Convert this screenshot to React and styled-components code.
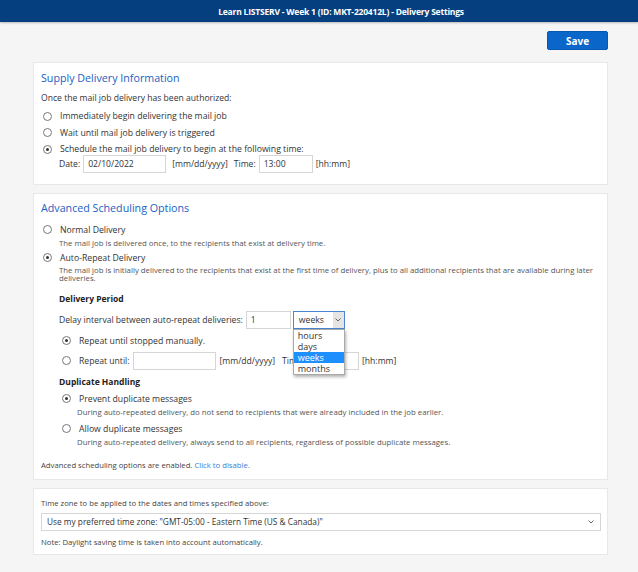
import React from "react";
import styled, { createGlobalStyle } from "styled-components";

const GlobalStyle = createGlobalStyle`
  body {
    margin: 0;
    background: #f5f5f5;
    font-family: "Open Sans", "Noto Sans", sans-serif;
    color: #333;
  }
`;

const Header = styled.div`
  height: 22px;
  background: #053f7f;
  color: #fff;
  font-size: 8.5px;
  font-weight: 700;
  letter-spacing: -0.2px;
  display: flex;
  justify-content: center;
  align-items: center;
  padding-left: 44px;
  box-shadow: 0 1px 2px rgba(0, 0, 0, 0.25);
`;

const Toolbar = styled.div`
  display: flex;
  justify-content: flex-end;
  padding: 9px 30px 0 0;
`;

const SaveButton = styled.button`
  width: 61px;
  height: 19px;
  border: 1px solid #0858b0;
  border-radius: 2px;
  background: #0a66c8;
  color: #fff;
  font-family: inherit;
  font-size: 10px;
  font-weight: 700;
  padding: 0;
`;

const Main = styled.div`
  display: flex;
  flex-direction: column;
  gap: 8px;
  padding: 12px 30px 16px 33px;
`;

const Card = styled.div`
  background: #fff;
  border: 1px solid #e8e8e8;
  padding: ${({ $pad }) => $pad || "7px 7px 11px"};
`;

const Title = styled.div`
  color: #1a5fc2;
  font-size: 10.7px;
  line-height: 16px;
`;

const Text = styled.div`
  font-size: 8.6px;
  line-height: 16px;
  margin-top: ${({ $mt }) => $mt || "0"};
`;

const RadioRow = styled.div`
  display: flex;
  align-items: center;
  gap: 8px;
  height: ${({ $h }) => $h || "16.5px"};
  font-size: 8.7px;
  padding-left: ${({ $indent }) => ($indent ? "21px" : "2px")};
  margin-top: ${({ $mt }) => $mt || "0"};
`;

const Radio = styled.span`
  width: 7px;
  height: 7px;
  border: 1px solid #777;
  border-radius: 50%;
  display: inline-flex;
  align-items: center;
  justify-content: center;
  flex-shrink: 0;
  background: #fff;

  &::after {
    content: "";
    width: 3px;
    height: 3px;
    border-radius: 50%;
    background: ${({ $on }) => ($on ? "#333" : "transparent")};
  }
`;

const Desc = styled.div`
  font-size: 7.8px;
  color: #555;
  line-height: ${({ $lh }) => $lh || "11px"};
  padding-left: ${({ $indent }) => ($indent ? "36px" : "18px")};
`;

const FieldRow = styled.div`
  display: flex;
  align-items: center;
  font-size: 8.6px;
  height: 18px;
  padding-left: ${({ $pl }) => $pl || "18px"};
  margin-top: ${({ $mt }) => $mt || "0"};
`;

const Input = styled.div`
  box-sizing: border-box;
  width: ${({ $w }) => $w}px;
  height: 18px;
  border: 1px solid #d6d6d6;
  font-size: 8.6px;
  line-height: 16px;
  padding-left: 4px;
  margin: ${({ $m }) => $m || "0 3px"};
  background: #fff;
`;

const Sub = styled.div`
  font-size: 8.5px;
  font-weight: 700;
  color: #222;
  padding-left: 18px;
  margin-top: ${({ $mt }) => $mt || "0"};
  line-height: 14px;
`;

const SelectWrap = styled.div`
  position: relative;
`;

const Select = styled.div`
  box-sizing: border-box;
  width: ${({ $w }) => $w};
  height: 18px;
  border: 1px solid ${({ $focus }) => ($focus ? "#4a86d0" : "#d6d6d6")};
  display: flex;
  align-items: center;
  justify-content: space-between;
  font-size: ${({ $fs }) => $fs || "8.7px"};
  padding-left: 5px;
  margin-top: ${({ $mt }) => $mt || "0"};
  background: #fff;
`;

const Chevron = styled.span`
  width: 11px;
  height: 100%;
  display: flex;
  align-items: center;
  justify-content: center;
  background: ${({ $boxed }) => ($boxed ? "#e4e4e4" : "transparent")};
  margin-right: ${({ $boxed }) => ($boxed ? "0" : "4px")};
`;

const Menu = styled.div`
  position: absolute;
  top: 18px;
  left: 0;
  width: 52px;
  box-sizing: border-box;
  background: #fff;
  border: 1px solid #a9a9a9;
  box-shadow: 1px 2px 3px rgba(0, 0, 0, 0.3);
  z-index: 2;
`;

const MenuItem = styled.div`
  font-size: 9px;
  line-height: 11px;
  padding-left: 4px;
  color: ${({ $active }) => ($active ? "#fff" : "#333")};
  background: ${({ $active }) => ($active ? "#1e8fff" : "transparent")};
`;

const Footnote = styled.div`
  font-size: 7.7px;
  line-height: 12px;
  color: #444;
  margin-top: ${({ $mt }) => $mt || "0"};
`;

const Link = styled.a`
  color: #3a7bd5;
  text-decoration: none;
`;

const Label = styled.span`
  white-space: nowrap;
  margin-left: ${({ $ml }) => $ml || "0"};
`;

function Arrow() {
  return (
    <svg width="6" height="4" viewBox="0 0 6 4">
      <path d="M0.5 0.5 L3 3 L5.5 0.5" fill="none" stroke="#666" strokeWidth="1" />
    </svg>
  );
}

export default function App() {
  return (
    <>
      <GlobalStyle />
      <Header>Learn LISTSERV - Week 1 (ID: MKT-220412L) - Delivery Settings</Header>
      <Toolbar>
        <SaveButton>Save</SaveButton>
      </Toolbar>
      <Main>
        <Card>
          <Title>Supply Delivery Information</Title>
          <Text $mt="4px">Once the mail job delivery has been authorized:</Text>
          <RadioRow $mt="2px">
            <Radio />
            Immediately begin delivering the mail job
          </RadioRow>
          <RadioRow>
            <Radio />
            Wait until mail job delivery is triggered
          </RadioRow>
          <RadioRow>
            <Radio $on />
            Schedule the mail job delivery to begin at the following time:
          </RadioRow>
          <FieldRow $mt="-3px">
            <Label>Date:</Label>
            <Input $w={83}>02/10/2022</Input>
            <Label $ml="3px">[mm/dd/yyyy]</Label>
            <Label $ml="6px">Time:</Label>
            <Input $w={54}>13:00</Input>
            <Label>[hh:mm]</Label>
          </FieldRow>
        </Card>

        <Card $pad="6px 7px 8px">
          <Title>Advanced Scheduling Options</Title>
          <RadioRow $mt="6px" $h="16px">
            <Radio />
            Normal Delivery
          </RadioRow>
          <Desc>The mail job is delivered once, to the recipients that exist at delivery time.</Desc>
          <RadioRow $mt="1px" $h="16px">
            <Radio $on />
            Auto-Repeat Delivery
          </RadioRow>
          <Desc $lh="8.5px">
            The mail job is initially delivered to the recipients that exist at the first time of delivery, plus to all additional recipients that are available during later deliveries.
          </Desc>
          <Sub $mt="9px">Delivery Period</Sub>
          <FieldRow $mt="5px">
            <Label>Delay interval between auto-repeat deliveries:</Label>
            <Input $w={45} $m="0 2px 0 3px">1</Input>
            <SelectWrap>
              <Select $w="52px" $focus>
                weeks
                <Chevron $boxed>
                  <Arrow />
                </Chevron>
              </Select>
              <Menu>
                <MenuItem>hours</MenuItem>
                <MenuItem>days</MenuItem>
                <MenuItem $active>weeks</MenuItem>
                <MenuItem>months</MenuItem>
              </Menu>
            </SelectWrap>
          </FieldRow>
          <RadioRow $indent $mt="2px" $h="20px">
            <Radio $on />
            Repeat until stopped manually.
          </RadioRow>
          <FieldRow $pl="21px" $mt="1px">
            <Radio />
            <Label $ml="8px">Repeat until:</Label>
            <Input $w={83} $m="0 3px 0 4px">{""}</Input>
            <Label>[mm/dd/yyyy]</Label>
            <Label $ml="7px">Time:</Label>
            <Input $w={52}>{""}</Input>
            <Label>[hh:mm]</Label>
          </FieldRow>
          <Sub $mt="5px">Duplicate Handling</Sub>
          <RadioRow $indent $mt="2px" $h="16px">
            <Radio $on />
            Prevent duplicate messages
          </RadioRow>
          <Desc $indent>During auto-repeated delivery, do not send to recipients that were already included in the job earlier.</Desc>
          <RadioRow $indent $mt="3px" $h="16px">
            <Radio />
            Allow duplicate messages
          </RadioRow>
          <Desc $indent>During auto-repeated delivery, always send to all recipients, regardless of possible duplicate messages.</Desc>
          <Footnote $mt="11px">
            Advanced scheduling options are enabled. <Link href="#">Click to disable.</Link>
          </Footnote>
        </Card>

        <Card $pad="7px 7px 6px">
          <Footnote $mt="1px">Time zone to be applied to the dates and times specified above:</Footnote>
          <Select $w="560px" $fs="8.3px" $mt="4px">
            Use my preferred time zone: "GMT-05:00 - Eastern Time (US &amp; Canada)"
            <Chevron>
              <Arrow />
            </Chevron>
          </Select>
          <Footnote $mt="5px">Note: Daylight saving time is taken into account automatically.</Footnote>
        </Card>
      </Main>
    </>
  );
}
